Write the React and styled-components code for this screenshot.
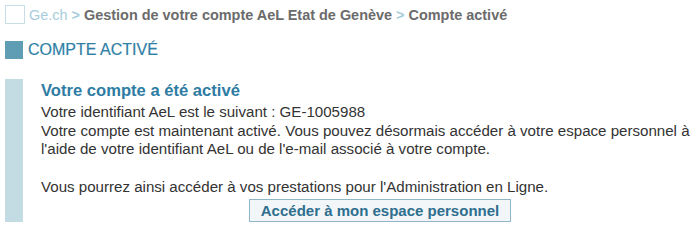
import React from "react";
import styled, { createGlobalStyle } from "styled-components";

const GlobalStyle = createGlobalStyle`
  html, body {
    margin: 0;
    padding: 0;
    background: #fff;
    overflow: hidden;
  }
  body {
    font-family: "Liberation Sans", Arial, sans-serif;
  }
`;

const Page = styled.div`
  width: 694px;
  height: 226px;
  overflow: hidden;
  padding: 5px 0 0 5px;
  box-sizing: border-box;
`;

const Breadcrumb = styled.nav`
  display: flex;
  align-items: center;
  height: 19px;
  font-size: 14.45px;
  font-weight: bold;
  color: #6b6b6b;
  white-space: nowrap;
`;

const HomeBox = styled.span`
  width: 18px;
  height: 17px;
  border: 1px solid #c9dde6;
  margin-right: 4px;
`;

const Crumb = styled.span`
  color: ${(p) => (p.$link ? "#a7cddc" : "#6b6b6b")};
  font-weight: ${(p) => (p.$link ? "normal" : "bold")};
`;

const Sep = styled.span`
  color: #a7cddc;
  margin: 0 4px;
`;

const Heading = styled.h1`
  display: flex;
  align-items: center;
  gap: 5px;
  margin: 17px 0 0;
  font-size: 16px;
  font-weight: normal;
  color: #2f80a5;
  text-transform: uppercase;
  line-height: 18px;
  -webkit-text-stroke: 0.2px #2f80a5;
`;

const Square = styled.span`
  width: 18px;
  height: 18px;
  background: #5e9db3;
`;

const Panel = styled.section`
  display: flex;
  margin-top: 20px;
`;

const Bar = styled.div`
  width: 18px;
  flex-shrink: 0;
  background: #c3dbe3;
  height: 143px;
`;

const Content = styled.div`
  flex: none;
  width: 678px;
  padding: 2px 0 0 18px;
  font-size: 15.1px;
  line-height: 18.5px;
  color: #333;
`;

const Title = styled.h2`
  margin: 0 0 2px;
  font-size: 16.6px;
  line-height: 20px;
  font-weight: bold;
  color: #2e7ca3;
`;

const Line = styled.p`
  margin: 0;
  white-space: nowrap;
  margin-top: ${(p) => (p.$gap ? "19px" : "0")};
`;

const Actions = styled.div`
  display: flex;
  justify-content: center;
  margin-top: 3px;
`;

const Button = styled.button`
  width: 262px;
  height: 23px;
  padding: 0;
  border: 1px solid #8fb6c8;
  background: #f2f6f8;
  color: #2e6e8e;
  font-family: "Liberation Sans", Arial, sans-serif;
  font-size: 15px;
  font-weight: bold;
  cursor: pointer;
`;

export default function App() {
  return (
    <>
      <GlobalStyle />
      <Page>
        <Breadcrumb>
          <HomeBox />
          <Crumb $link>Ge.ch</Crumb>
          <Sep>&gt;</Sep>
          <Crumb>Gestion de votre compte AeL Etat de Genève</Crumb>
          <Sep>&gt;</Sep>
          <Crumb>Compte activé</Crumb>
        </Breadcrumb>

        <Heading>
          <Square />
          Compte activé
        </Heading>

        <Panel>
          <Bar />
          <Content>
            <Title>Votre compte a été activé</Title>
            <Line>Votre identifiant AeL est le suivant : GE-1005988</Line>
            <Line>
              Votre compte est maintenant activé. Vous pouvez désormais accéder à votre espace personnel à
            </Line>
            <Line>l'aide de votre identifiant AeL ou de l'e-mail associé à votre compte.</Line>
            <Line $gap>Vous pourrez ainsi accéder à vos prestations pour l'Administration en Ligne.</Line>
            <Actions>
              <Button>Accéder à mon espace personnel</Button>
            </Actions>
          </Content>
        </Panel>
      </Page>
    </>
  );
}
